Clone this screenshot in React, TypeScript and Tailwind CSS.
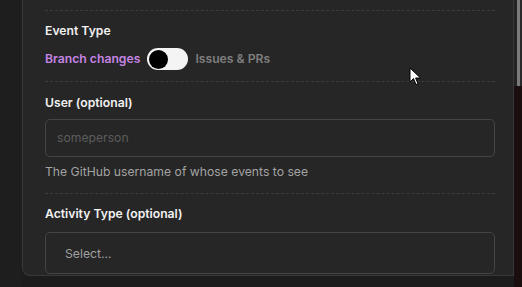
export default function App() {
  return (
    <div className="w-[522px] h-[287px] bg-[#1c1c1d] overflow-hidden flex relative font-['Inter',sans-serif]">
      <div className="w-[22px] shrink-0 bg-[#1e1e1f]" />
      <div className="w-[492px] h-[276px] shrink-0 bg-[#262626] border-l border-r border-b border-[#383838] rounded-bl-[8px] pl-[22px] pr-[18px] flex flex-col">
        <div className="mt-[10px] border-t border-dashed border-[#3c3c3c]" />
        <div className="mt-[10px] h-[20px] leading-[20px] text-[12.2px] font-semibold text-[#f2f2f2]">Event Type</div>
        <div className="mt-[7px] h-[22px] flex items-center gap-[7px] text-[12.2px] font-semibold">
          <span className="text-[#c584e3]">Branch changes</span>
          <div className="w-[41px] h-[22px] rounded-full bg-[#f4f4f4] flex items-center pl-[2px]">
            <div className="w-[19px] h-[19px] rounded-full bg-black" />
          </div>
          <span className="text-[#7f7f7f]">Issues &amp; PRs</span>
        </div>
        <div className="mt-[11px] border-t border-dashed border-[#3c3c3c]" />
        <div className="mt-[11px] h-[20px] leading-[20px] text-[12.2px] font-semibold text-[#f2f2f2]">User (optional)</div>
        <div className="mt-[6px] h-[38px] rounded-[5px] border border-[#444444] bg-[#262626] flex items-center pl-[11px] text-[12.2px] text-[#5c5c5c]">someperson</div>
        <div className="mt-[5px] h-[20px] leading-[20px] text-[12.2px] text-[#a3a3a3]">The GitHub username of whose events to see</div>
        <div className="mt-[11px] border-t border-dashed border-[#3c3c3c]" />
        <div className="mt-[10px] h-[20px] leading-[20px] text-[12.2px] font-semibold text-[#f2f2f2]">Activity Type (optional)</div>
        <div className="mt-[8px] h-[42px] rounded-[5px] border border-[#444444] bg-[#262626] flex items-center pl-[19px] pt-[2px] text-[12.2px] text-[#a0a0a0]">Select...</div>
      </div>
      <div className="w-[8px] shrink-0 flex flex-col">
        <div className="h-[86px] flex">
          <div className="w-[3px] bg-[#232323]" />
          <div className="w-[3px] bg-[#7a7a7a]" />
          <div className="w-[2px] bg-[#2a2a2a]" />
        </div>
        <div className="flex-1 bg-[#1a0e0e]" />
      </div>
      <svg className="absolute left-[409px] top-[67px]" width="13" height="19" viewBox="0 0 13 19">
        <path d="M1 1 L1 15 L4.5 11.5 L7 17.5 L9 16.7 L6.6 11 L11.5 11 Z" fill="#ffffff" stroke="#000000" strokeWidth="1" strokeLinejoin="round" />
      </svg>
    </div>
  );
}
